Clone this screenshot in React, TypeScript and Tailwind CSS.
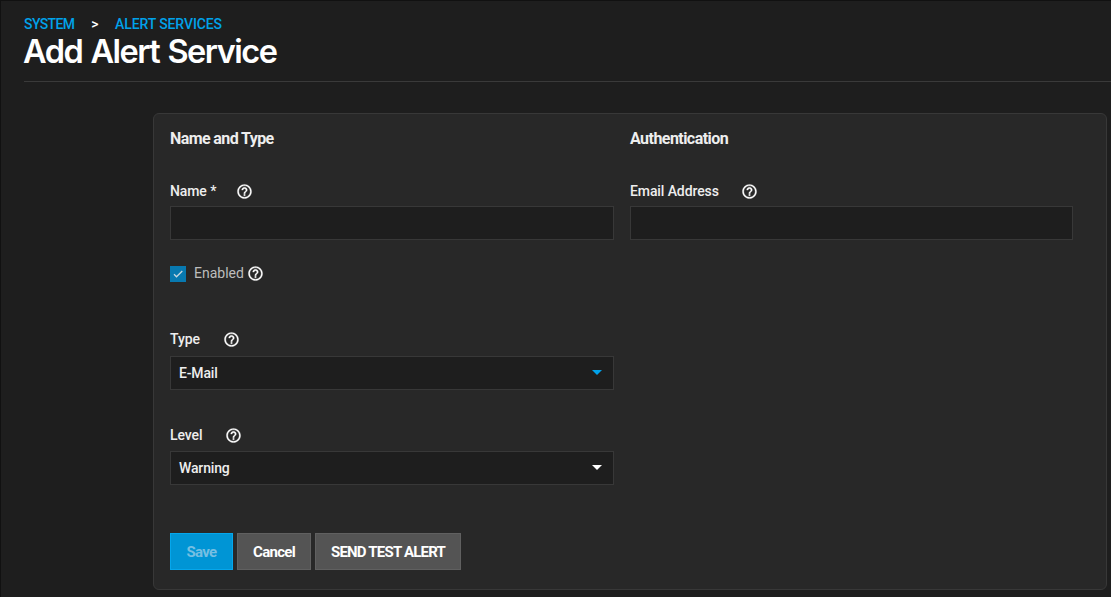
import type { ReactNode } from 'react';

function Help() {
  return (
    <svg viewBox="0 0 24 24" className="size-[17px] shrink-0 text-white" fill="currentColor">
      <path
        stroke="currentColor"
        strokeWidth="0.4"
        d="M11 18h2v-2h-2v2zm1-16C6.48 2 2 6.48 2 12s4.48 10 10 10 10-4.48 10-10S17.52 2 12 2zm0 18c-4.41 0-8-3.59-8-8s3.59-8 8-8 8 3.59 8 8-3.59 8-8 8zm0-14c-2.21 0-4 1.79-4 4h2c0-1.1.9-2 2-2s2 .9 2 2c0 2-3 1.75-3 5h2c0-2.25 3-2.5 3-5 0-2.21-1.79-4-4-4z"
      />
    </svg>
  );
}

function FieldLabel({ children, gap }: { children: ReactNode; gap: string }) {
  return (
    <div className={`flex h-[17px] items-center whitespace-nowrap text-[14px] font-medium leading-[17px] tracking-[-0.1px] ${gap}`}>
      <span>{children}</span>
      <Help />
    </div>
  );
}

function SelectBox({ value, arrow }: { value: string; arrow: string }) {
  return (
    <button
      type="button"
      className="flex h-[34px] w-[444px] items-center justify-between border border-[#383838] bg-[#1e1e1e] pr-[11.5px] pl-2 text-[14px] font-medium tracking-[-0.15px]"
    >
      <span>{value}</span>
      <svg viewBox="0 0 10 5" className={`mb-[1px] h-[5px] w-[10px] ${arrow}`} fill="currentColor">
        <path d="M0 0h10L5 5z" />
      </svg>
    </button>
  );
}

export default function App() {
  return (
    <div className="h-[597px] w-full overflow-hidden border-t border-l border-[#111111] bg-[#1e1e1e] font-['Roboto','Liberation_Sans',sans-serif] text-[#eeeeee]">
      <header className="ml-[23px] h-[81px] border-b border-[#3a3a3a] pt-[14px]">
        <nav className="flex h-[19px] items-center text-[14px] font-medium leading-[19px] text-[#00a2ea]">
          <a className="w-[51px] whitespace-nowrap tracking-[-0.6px]">SYSTEM</a>
          <span className="w-[40px] text-center font-medium text-white">&gt;</span>
          <a className="whitespace-nowrap tracking-[-0.1px]">ALERT SERVICES</a>
        </nav>
        <h1 className="-ml-px whitespace-nowrap font-['Inter','Liberation_Sans',sans-serif] text-[32.5px] font-semibold leading-[36px] tracking-[-1.5px] text-white [word-spacing:1.5px]">
          Add Alert Service
        </h1>
      </header>

      <form className="mt-[31px] ml-[152px] flex h-[477px] w-[954px] flex-col rounded-[6px] border border-[#383838] bg-[#282828] pt-[15px] pl-4">
        <div className="flex gap-4">
          <section className="w-[444px]">
            <h2 className="h-5 whitespace-nowrap text-[16px] font-bold leading-5 tracking-[-0.6px]">Name and Type</h2>
            <div className="mt-[34px]">
              <FieldLabel gap="gap-[20px]">Name *</FieldLabel>
              <input aria-label="Name" className="mt-[6px] block h-[34px] w-full border border-[#383838] bg-[#1e1e1e] outline-none" />
            </div>
            <div className="mt-[25px] flex h-[17px] items-center text-[14px] leading-[17px]">
              <span className="flex size-4 items-center justify-center bg-[#0879b0]">
                <svg viewBox="0 0 16 16" className="size-4" fill="none" stroke="#c8d7df" strokeWidth="1.3">
                  <path d="M4 8.3l2.5 2.5L12.3 5" />
                </svg>
              </span>
              <span className="mr-[3px] ml-2 text-[#bdbdbd]">Enabled</span>
              <Help />
            </div>
            <div className="mt-[49px]">
              <FieldLabel gap="gap-[23px]">Type</FieldLabel>
              <div className="mt-[8px]">
                <SelectBox value="E-Mail" arrow="text-[#00a2ea]" />
              </div>
            </div>
            <div className="mt-[37px]">
              <FieldLabel gap="gap-[23px]">Level</FieldLabel>
              <div className="mt-[7px]">
                <SelectBox value="Warning" arrow="text-white" />
              </div>
            </div>
          </section>
          <section className="w-[443px]">
            <h2 className="h-5 whitespace-nowrap text-[16px] font-bold leading-5 tracking-[-0.55px]">Authentication</h2>
            <div className="mt-[34px]">
              <FieldLabel gap="gap-[22.5px]">Email Address</FieldLabel>
              <input aria-label="Email Address" className="mt-[6px] block h-[34px] w-full border border-[#383838] bg-[#1e1e1e] outline-none" />
            </div>
          </section>
        </div>
        <div className="mt-[48px] flex gap-1 text-[15px] font-bold whitespace-nowrap">
          <button type="button" className="h-[37px] w-[63px] border border-[#05a7ec] bg-[#0095d5] pt-px tracking-[-0.7px] text-[#76bfe2]">Save</button>
          <button type="button" className="h-[37px] w-[74px] border border-[#606060] bg-[#545454] pt-px tracking-[-0.7px] text-white">Cancel</button>
          <button type="button" className="h-[37px] w-[146px] border border-[#606060] bg-[#545454] pt-px tracking-[-0.8px] text-white">SEND TEST ALERT</button>
        </div>
      </form>
    </div>
  );
}
